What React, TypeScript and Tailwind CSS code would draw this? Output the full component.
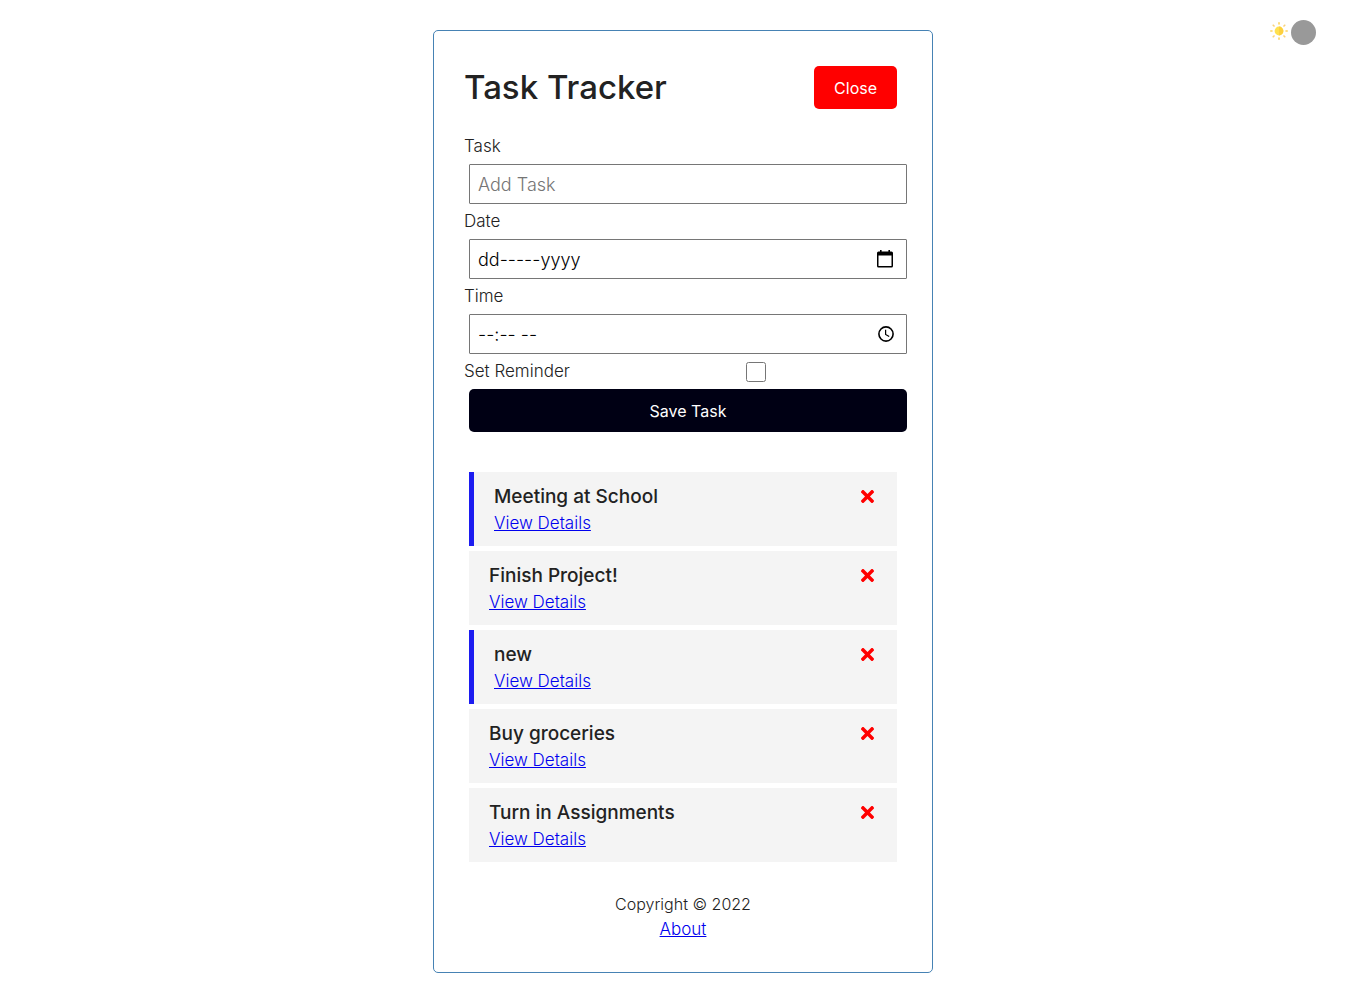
import { useState } from "react";
import { FaTimes } from "react-icons/fa";

const initialTasks = [
  { id: 1, text: "Meeting at School", reminder: true },
  { id: 2, text: "Finish Project!", reminder: false },
  { id: 3, text: "new", reminder: true },
  { id: 4, text: "Buy groceries", reminder: false },
  { id: 5, text: "Turn in Assignments", reminder: false },
];

const rays = [0, 45, 90, 135, 180, 225, 270, 315];

function SunIcon() {
  return (
    <svg viewBox="0 0 18 18" className="mt-0.5 h-[18px] w-[18px]" aria-hidden="true">
      {rays.map((angle) => (
        <path
          key={angle}
          d="M9 .8v1.200"
          stroke={angle % 90 === 0 ? "#fcd462" : "#f9d27c"}
          strokeWidth="1.600"
          strokeLinecap="round"
          transform={`rotate(${angle} 9 9)`}
        />
      ))}
      <circle cx="9" cy="9" r="4.400" fill="#ffe14d" />
      <path d="M9 4.600a4.400 4.400 0 0 1 0 8.800z" fill="#fdd03f" />
    </svg>
  );
}

function CalendarIcon() {
  return (
    <svg viewBox="0 0 16 18" className="h-[18px] w-4" aria-hidden="true">
      <path
        fillRule="evenodd"
        d="M3 0h1.600v1.500h6.800V0H13v1.500h1.500A1.500 1.500 0 0 1 16 3v13a1.500 1.500 0 0 1-1.500 1.500h-13A1.500 1.500 0 0 1 0 16V3a1.500 1.500 0 0 1 1.500-1.500H3zM1.500 5.500V16h13V5.500z"
      />
    </svg>
  );
}

function ClockIcon() {
  return (
    <svg viewBox="0 0 16 16" className="h-4 w-4" fill="none" stroke="#000" aria-hidden="true">
      <circle cx="8" cy="8" r="7.100" strokeWidth="1.600" />
      <path d="M7.600 3.800v4.600l3.600 2.200" strokeWidth="1.200" />
    </svg>
  );
}

const inputClass =
  "mx-[5px] my-[5px] block h-10 w-full rounded-[1px] border border-[#767676] bg-white px-2 text-[18px] font-light text-black";

export default function App() {
  const [tasks, setTasks] = useState(initialTasks);
  return (
    <div className="grid grid-cols-[1fr_minmax(0,500px)_1fr] bg-white font-['Inter',sans-serif] text-[17px] leading-[25px] font-light text-[#222]">
      <main className="col-start-2 my-[30px] rounded-[5px] border border-[steelblue] p-[30px]">
        <header className="mb-5 flex items-center justify-between">
          <h1 className="text-[33px] leading-[53px] font-medium">Task Tracker</h1>
          <button
            type="button"
            className="m-[5px] h-[43px] rounded-[5px] bg-[red] px-5 text-base font-normal text-white"
          >
            Close
          </button>
        </header>

        <form className="mb-10" onSubmit={(e) => e.preventDefault()}>
          <label htmlFor="task" className="block">Task</label>
          <input
            id="task"
            type="text"
            placeholder="Add Task"
            className={`${inputClass} placeholder:text-[#757575]`}
          />
          <label htmlFor="date" className="block">Date</label>
          <div className="relative">
            <input id="date" type="text" placeholder="dd-----yyyy" className={`${inputClass} placeholder:text-black`} />
            <button type="button" aria-label="Pick a date" className="absolute inset-y-0 right-2 flex w-[18px] items-center justify-center">
              <CalendarIcon />
            </button>
          </div>
          <label htmlFor="time" className="block">Time</label>
          <div className="relative">
            <input id="time" type="text" placeholder="--:-- --" className={`${inputClass} placeholder:text-black`} />
            <button type="button" aria-label="Pick a time" className="absolute inset-y-0 right-2 flex w-4 items-center justify-center">
              <ClockIcon />
            </button>
          </div>
          <div className="grid grid-cols-3 items-center">
            <label htmlFor="reminder" className="whitespace-nowrap">Set Reminder</label>
            <input id="reminder" type="checkbox" className="col-span-2 h-5 w-5 justify-self-center" />
          </div>
          <button
            type="submit"
            className="m-[5px] block h-[43px] w-full rounded-[5px] bg-[#000014] px-5 text-base font-normal text-white"
          >
            Save Task
          </button>
        </form>

        <ul className="mx-[5px] flex flex-col gap-[5px]">
          {tasks.map((task) => (
            <li
              key={task.id}
              className={`bg-[#f4f4f4] px-5 py-[10px] ${task.reminder ? "border-l-[5px] border-[#1c1cf0]" : ""}`}
            >
              <h3 className="flex items-center justify-between text-[19px] leading-[29px] font-medium">
                {task.text}
                <button
                  type="button"
                  aria-label={`Delete ${task.text}`}
                  onClick={() => setTasks(tasks.filter((t) => t.id !== task.id))}
                >
                  <FaTimes className="h-[19px] w-[19px] text-[red]" />
                </button>
              </h3>
              <a href="#details" className="block w-fit text-[#0000ee] underline">View Details</a>
            </li>
          ))}
        </ul>

        <footer className="mt-[30px] text-center">
          <p className="text-base leading-[25px]">Copyright © 2022</p>
          <a href="#about" className="mx-auto block w-fit text-[#0000ee] underline">About</a>
        </footer>
      </main>

      <button
        type="button"
        aria-label="Toggle theme"
        className="mt-5 mr-[50px] flex h-[25px] items-start gap-[3px] self-start justify-self-end"
      >
        <SunIcon />
        <span className="h-[25px] w-[25px] rounded-full bg-[#999]" />
      </button>
    </div>
  );
}
